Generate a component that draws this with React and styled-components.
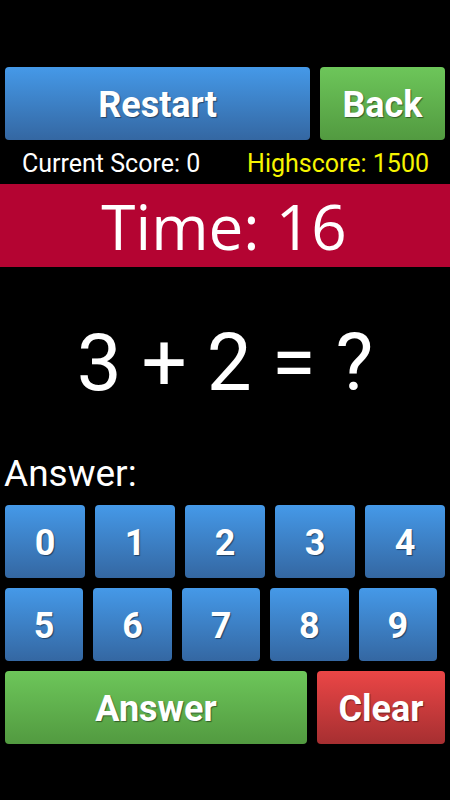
import styled, { createGlobalStyle, css } from 'styled-components';

const GlobalStyle = createGlobalStyle`
  html, body {
    margin: 0;
    padding: 0;
    background: #000;
  }
  body {
    font-family: Roboto, "Noto Sans", sans-serif;
  }
`;

const palettes = {
  blue: css`
    background: linear-gradient(to bottom, #4599e8, #3467a2);
  `,
  green: css`
    background: linear-gradient(to bottom, #6dc65a, #529a40);
  `,
  red: css`
    background: linear-gradient(to bottom, #eb4646, #a62f31);
  `,
};

const Screen = styled.main`
  width: 450px;
  height: 800px;
  background: #000;
  padding-top: 67px;
  box-sizing: border-box;
  display: flex;
  flex-direction: column;
  color: #fff;
`;

const ButtonRow = styled.div`
  display: flex;
  gap: 10px;
  padding: 0 5px;
  height: 73px;
`;

const Button = styled.button`
  ${(p) => palettes[p.$color]}
  width: ${(p) => p.$width}px;
  flex: none;
  height: 100%;
  border: none;
  border-radius: 4px;
  padding: 3px 0 0;
  color: #fff;
  font-family: Roboto, sans-serif;
  font-weight: 700;
  font-size: ${(p) => p.$size || 36}px;
  text-shadow: 1px 1px 1px rgba(0, 0, 0, 0.45);
  display: flex;
  align-items: center;
  justify-content: center;
  box-sizing: border-box;
`;

const Scores = styled.div`
  display: flex;
  justify-content: space-between;
  padding: 0 21px 0 22px;
  height: 43px;
  align-items: center;
  font-size: 25px;
  margin-top: 2px;
  margin-bottom: -1px;
`;

const Score = styled.span`
  color: ${(p) => (p.$high ? '#f6f400' : '#fff')};
`;

const TimeBar = styled.div`
  background: #b40432;
  height: 83px;
  display: flex;
  align-items: center;
  justify-content: center;
  font-family: "Open Sans", sans-serif;
  font-size: 62px;
  padding-right: 2px;
`;

const Question = styled.div`
  height: 190px;
  display: flex;
  align-items: center;
  justify-content: center;
  font-size: 80px;
  padding-top: 1px;
  box-sizing: border-box;
`;

const AnswerLabel = styled.div`
  font-size: 37px;
  padding-left: 4px;
  height: 49px;
  line-height: 39px;
  margin-top: -3px;
`;

const Pad = styled.div`
  display: flex;
  flex-direction: column;
  gap: 10px;
  margin-top: 2px;
`;

const App = () => {
  const row1 = [0, 1, 2, 3, 4];
  const row2 = [5, 6, 7, 8, 9];
  return (
    <>
      <GlobalStyle />
      <Screen>
        <ButtonRow>
          <Button $color="blue" $width={305}>Restart</Button>
          <Button $color="green" $width={125}>Back</Button>
        </ButtonRow>
        <Scores>
          <Score>Current Score: 0</Score>
          <Score $high>Highscore: 1500</Score>
        </Scores>
        <TimeBar>Time: 16</TimeBar>
        <Question>3 + 2 = ?</Question>
        <AnswerLabel>Answer:</AnswerLabel>
        <Pad>
          <ButtonRow>
            {row1.map((n) => (
              <Button key={n} $color="blue" $width={80}>{n}</Button>
            ))}
          </ButtonRow>
          <ButtonRow>
            {row2.map((n) => (
              <Button key={n} $color="blue" $width={78.4}>{n}</Button>
            ))}
          </ButtonRow>
          <ButtonRow>
            <Button $color="green" $width={302}>Answer</Button>
            <Button $color="red" $width={128}>Clear</Button>
          </ButtonRow>
        </Pad>
      </Screen>
    </>
  );
};

export default App;
